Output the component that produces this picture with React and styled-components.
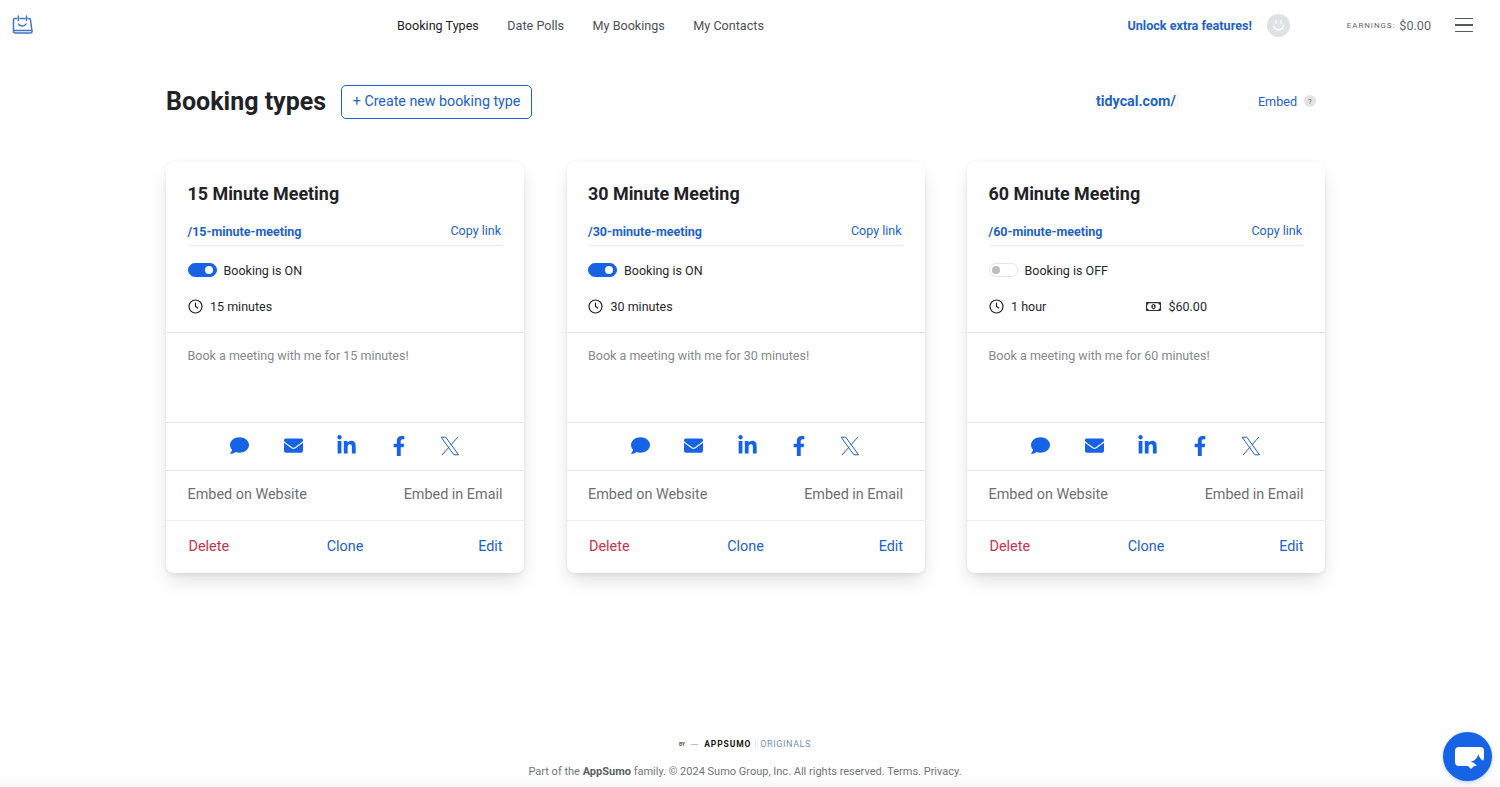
import React from "react";
import styled, { createGlobalStyle } from "styled-components";
import { FaComment, FaEnvelope, FaLinkedinIn, FaFacebookF, FaRegMoneyBillAlt } from "react-icons/fa";

const BLUE = "#1e62c4";
const BRIGHT = "#1763e6";

const MEETINGS = [
  { name: "15 Minute Meeting", slug: "15-minute-meeting", on: true, time: "15 minutes", mins: 15 },
  { name: "30 Minute Meeting", slug: "30-minute-meeting", on: true, time: "30 minutes", mins: 30 },
  { name: "60 Minute Meeting", slug: "60-minute-meeting", on: false, time: "1 hour", mins: 60, price: "$60.00" },
];

function Logo() {
  return (
    <svg width="21" height="20" viewBox="0 0 21 20" fill="none" stroke="#3f75c4" strokeWidth="1.5" strokeLinecap="round" strokeLinejoin="round">
      <path d="M4.500 3.500H2.500c-.6 0-1 .4-1 1V16c0 1.200.8 2 2 2h14.800c1.300 0 2-1 1.700-2l-1.500-11c-.1-1-.6-1.500-1.500-1.500H16M8 3.500h5" />
      <path d="M1.800 15.500h17" />
      <path d="M6.300 1v4.500M14.500 1v4.500" />
      <path d="M6.500 9c1 2.600 6.300 2.600 7.500 0" />
    </svg>
  );
}

function ClockIcon() {
  return (
    <svg width="15" height="15" viewBox="0 0 15 15" fill="none" stroke="#222" strokeWidth="1.2" strokeLinecap="round" strokeLinejoin="round">
      <circle cx="7.500" cy="7.500" r="6.500" />
      <path d="M7.500 4v3.500l2.300 1.500" />
    </svg>
  );
}

function XIcon() {
  return (
    <svg width="20" height="20" viewBox="0 0 20 20" fill="none" stroke={BLUE} strokeWidth="1" strokeLinejoin="round" strokeLinecap="round">
      <path d="M1.500 1.200h4.300l12.700 17.600h-4.300z" />
      <path d="M17.800 1.200 11 8.800M2.200 18.800l7.100-8" />
    </svg>
  );
}

function ChatIcon() {
  return (
    <svg width="34" height="26" viewBox="0 0 34 26" fill="none">
      <path d="M8 3h21a4 4 0 0 1 4 4v6c0 5-4 9-9 9h-1l-3 3-3-3H8a4 4 0 0 1-4-4V7a4 4 0 0 1 4-4z" fill="#fff" />
      <path d="M27.300 10c.8 3.900 3.600 6.800 7.500 7.700-3.900.9-6.700 3.800-7.500 7.700-.8-3.900-3.600-6.800-7.500-7.700 3.900-.9 6.700-3.800 7.500-7.700z" fill={BRIGHT} />
    </svg>
  );
}

function Card({ meeting }) {
  return (
    <Box>
      <Head>
        <Name>{meeting.name}</Name>
        <LinkRow>
          <Slug>/{meeting.slug}</Slug>
          <CopyLink>Copy link</CopyLink>
        </LinkRow>
        <ToggleRow>
          <Toggle on={meeting.on} />
          <span>Booking is {meeting.on ? "ON" : "OFF"}</span>
        </ToggleRow>
        <MetaRow>
          <Meta>
            <ClockIcon />
            {meeting.time}
          </Meta>
          {meeting.price && (
            <Price>
              <FaRegMoneyBillAlt size={15} color="#333" />
              {meeting.price}
            </Price>
          )}
        </MetaRow>
      </Head>
      <Description>Book a meeting with me for {meeting.mins} minutes!</Description>
      <Share>
        <ShareIcon gap={34.5}><FaComment size={19} /></ShareIcon>
        <ShareIcon gap={33.5}><FaEnvelope size={19} /></ShareIcon>
        <ShareIcon gap={31.5}><FaLinkedinIn size={21} /></ShareIcon>
        <ShareIcon gap={31}><FaFacebookF size={20} /></ShareIcon>
        <ShareIcon><XIcon /></ShareIcon>
      </Share>
      <EmbedRow>
        <span>Embed on Website</span>
        <span>Embed in Email</span>
      </EmbedRow>
      <Actions>
        <Delete>Delete</Delete>
        <Clone>Clone</Clone>
        <Edit>Edit</Edit>
      </Actions>
    </Box>
  );
}

function App() {
  return (
    <Page>
      <Global />
      <Nav>
        <Logo />
        <Links>
          <NavLink active>Booking Types</NavLink>
          <NavLink>Date Polls</NavLink>
          <NavLink>My Bookings</NavLink>
          <NavLink>My Contacts</NavLink>
        </Links>
        <Right>
          <Unlock>Unlock extra features!</Unlock>
          <Avatar>
            <svg width="23" height="23" viewBox="0 0 23 23" fill="none" stroke="#fff" strokeWidth="1.3" strokeLinecap="round">
              <path d="M9 6.500v3M14 6.500v3M6.500 12c1.500 5 8.500 5 10 0" />
            </svg>
          </Avatar>
          <Earnings>
            <small>Earnings:</small>
            $0.00
          </Earnings>
          <Burger>
            <i />
            <i />
            <i />
          </Burger>
        </Right>
      </Nav>
      <Main>
        <TitleRow>
          <Title>Booking types</Title>
          <CreateButton>+ Create new booking type</CreateButton>
          <Domain>
            <DomainText>tidycal.com/</DomainText>
            <EmbedLink>Embed</EmbedLink>
            <Help>?</Help>
          </Domain>
        </TitleRow>
        <Cards>
          {MEETINGS.map((m) => (
            <Card key={m.slug} meeting={m} />
          ))}
        </Cards>
      </Main>
      <Footer>
        <Brand>
          <By>BY</By>
          <Dash />
          <Sumo>APPSUMO</Sumo>
          <Originals>ORIGINALS</Originals>
        </Brand>
        <Legal>
          Part of the <b>AppSumo</b> family. © 2024 Sumo Group, Inc. All rights reserved. Terms. Privacy.
        </Legal>
      </Footer>
      <ChatButton>
        <ChatIcon />
      </ChatButton>
    </Page>
  );
}

const Global = createGlobalStyle`
  html, body {
    margin: 0;
    background: #fff;
    font-family: Roboto, "Liberation Sans", sans-serif;
    color: #1f2226;
    overflow: hidden;
  }
`;

const Page = styled.div`
  height: 787px;
  display: flex;
  flex-direction: column;
`;

const Nav = styled.header`
  height: 50px;
  flex-shrink: 0;
  padding-left: 12px;
  display: grid;
  grid-template-columns: 385px 1fr auto;
  align-items: center;
`;

const Links = styled.nav`
  display: flex;
  gap: 28.500px;
`;

const NavLink = styled.a`
  font-size: 12.600px;
  color: ${(props) => (props.active ? "#1f2226" : "#4b5057")};
`;

const Right = styled.div`
  display: flex;
  align-items: center;
  padding-right: 27px;
`;

const Unlock = styled.a`
  font-size: 12.600px;
  font-weight: 700;
  color: ${BLUE};
`;

const Avatar = styled.div`
  width: 23px;
  height: 23px;
  margin-left: 15px;
  border-radius: 50%;
  background: #dfe1e6;
`;

const Earnings = styled.div`
  margin-left: 57px;
  display: flex;
  align-items: center;
  gap: 4px;
  font-size: 12.600px;
  color: #5f646b;

  small {
    font-size: 8px;
    letter-spacing: 0.900px;
    text-transform: uppercase;
  }
`;

const Burger = styled.div`
  margin-left: 24px;
  width: 18px;
  display: flex;
  flex-direction: column;
  gap: 5px;

  i {
    display: block;
    height: 1.500px;
    background: #55595f;
  }
`;

const Main = styled.main`
  width: 1159px;
  margin-left: 166px;
`;

const TitleRow = styled.div`
  height: 68px;
  margin-top: 17px;
  display: flex;
  align-items: center;
`;

const Title = styled.h1`
  margin: 0;
  font-size: 25px;
  font-weight: 700;
  color: #1f2226;
`;

const CreateButton = styled.button`
  margin: 2px 0 0 15px;
  height: 34px;
  width: 191px;
  padding: 0 0 2px;
  border: 1px solid ${BLUE};
  border-radius: 5px;
  background: #fff;
  font-family: inherit;
  font-size: 14.250px;
  color: ${BLUE};
`;

const Domain = styled.div`
  margin-left: auto;
  padding-right: 9px;
  display: flex;
  align-items: center;
`;

const DomainText = styled.span`
  width: 81px;
  white-space: nowrap;
  border-right: 1px solid #eceef2;
  font-size: 14.250px;
  font-weight: 700;
  color: ${BLUE};
`;

const EmbedLink = styled.a`
  margin-left: 80px;
  font-size: 12.600px;
  color: ${BLUE};
`;

const Help = styled.span`
  margin-left: 7px;
  width: 12px;
  height: 12px;
  border-radius: 50%;
  background: #e2e4e8;
  display: flex;
  align-items: center;
  justify-content: center;
  font-size: 8px;
  color: #666;
`;

const Cards = styled.div`
  margin-top: 27px;
  display: grid;
  grid-template-columns: repeat(3, 358px);
  justify-content: space-between;
`;

const Box = styled.article`
  height: 411px;
  background: #fff;
  border-radius: 8px;
  box-shadow: 0 10px 20px -3px rgba(0, 0, 0, 0.13), 0 4px 6px -2px rgba(0, 0, 0, 0.05), 0 0 4px rgba(0, 0, 0, 0.05);
  display: flex;
  flex-direction: column;
`;

const Head = styled.div`
  height: 171px;
  box-sizing: border-box;
  padding: 20px 22px 0 21.500px;
  border-bottom: 1px solid #e6e7ea;
`;

const Name = styled.h3`
  margin: 0;
  font-size: 17.900px;
  line-height: 24px;
  font-weight: 700;
  color: #1f2226;
`;

const LinkRow = styled.div`
  margin-top: 13px;
  height: 27px;
  box-sizing: border-box;
  padding-top: 5px;
  display: flex;
  justify-content: space-between;
  border-bottom: 1px solid #eceded;
  font-size: 12.500px;
`;

const Slug = styled.a`
  font-weight: 700;
  color: ${BLUE};
`;

const CopyLink = styled.a`
  color: ${BLUE};
  margin: -1px 1px 0 0;
`;

const ToggleRow = styled.div`
  margin-top: 16px;
  height: 16px;
  display: flex;
  align-items: center;
  gap: 7px;
  font-size: 12.500px;
  color: #25282c;
`;

const Toggle = styled.span`
  position: relative;
  width: 29px;
  height: 14px;
  box-sizing: border-box;
  border-radius: 7px;
  background: ${(props) => (props.on ? BRIGHT : "#fff")};
  border: 1px solid ${(props) => (props.on ? BRIGHT : "#e3e4e6")};

  &::after {
    content: "";
    position: absolute;
    top: 2px;
    left: ${(props) => (props.on ? "16px" : "2px")};
    width: 8px;
    height: 8px;
    border-radius: 50%;
    background: ${(props) => (props.on ? "#fff" : "#bdbdbd")};
  }
`;

const MetaRow = styled.div`
  margin-top: 20px;
  height: 16px;
  display: flex;
  align-items: center;
  font-size: 12.500px;
  color: #25282c;
`;

const Meta = styled.span`
  width: 157px;
  display: flex;
  align-items: center;
  gap: 7.500px;
`;

const Price = styled.span`
  display: flex;
  align-items: center;
  gap: 8px;
`;

const Description = styled.p`
  margin: 0;
  height: 90px;
  box-sizing: border-box;
  padding: 15px 21.500px 0;
  border-bottom: 1px solid #e6e7ea;
  font-size: 12.500px;
  line-height: 16px;
  color: #85888d;
`;

const Share = styled.div`
  height: 48px;
  box-sizing: border-box;
  padding-bottom: 2px;
  display: flex;
  align-items: center;
  justify-content: center;
  border-bottom: 1px solid #e6e7ea;
`;

const ShareIcon = styled.a`
  display: flex;
  margin-right: ${(props) => props.gap || 0}px;
  color: ${BRIGHT};
`;

const EmbedRow = styled.div`
  height: 50px;
  box-sizing: border-box;
  padding: 0 21.500px 2px;
  display: flex;
  align-items: center;
  justify-content: space-between;
  border-bottom: 1px solid #eceded;
  font-size: 14.400px;
  color: #6c7075;
`;

const Actions = styled.div`
  flex: 1;
  padding: 0 21.500px 2px 22.500px;
  display: grid;
  grid-template-columns: 1fr auto 1fr;
  align-items: center;
  font-size: 14.400px;
`;

const Clone = styled.a`
  margin-left: -1px;
  color: ${BLUE};
`;

const Edit = styled.a`
  justify-self: end;
  color: ${BLUE};
`;

const Delete = styled.a`
  color: #c4364a;
`;

const Footer = styled.footer`
  margin-top: auto;
  height: 50px;
  padding-right: 10px;
  display: flex;
  flex-direction: column;
  align-items: center;
  background: linear-gradient(to bottom, #fff 75%, #f8f8f8);
`;

const Brand = styled.div`
  display: flex;
  align-items: center;
  height: 14px;
`;

const By = styled.span`
  font-size: 5px;
  font-weight: 700;
  color: #555;
`;

const Dash = styled.span`
  width: 7px;
  height: 1px;
  margin: 0 6px;
  background: #bbb;
`;

const Sumo = styled.span`
  font-size: 8.500px;
  font-weight: 700;
  letter-spacing: 0.900px;
  color: #15171a;
`;

const Originals = styled.span`
  margin-left: 4px;
  padding-left: 4px;
  border-left: 1px solid #e4e6e8;
  font-size: 9px;
  letter-spacing: 0.600px;
  color: #6f93b0;
`;

const Legal = styled.div`
  margin-top: 14px;
  font-size: 11px;
  color: #70747a;

  b {
    font-weight: 700;
    color: #5c6066;
  }
`;

const ChatButton = styled.button`
  position: fixed;
  left: 1443px;
  top: 732px;
  width: 49px;
  height: 49px;
  padding: 0;
  border: none;
  border-radius: 50%;
  background: ${BRIGHT};
  display: flex;
  align-items: center;
  justify-content: center;
  box-shadow: 0 1px 4px rgba(23, 99, 230, 0.3);
`;

export default App;
